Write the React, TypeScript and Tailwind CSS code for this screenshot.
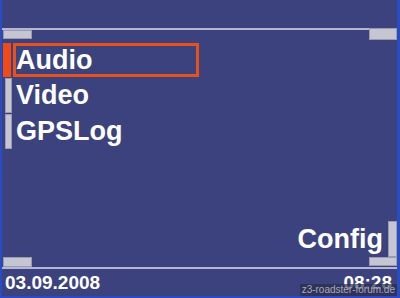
const font = { fontFamily: '"Liberation Sans", Arial, sans-serif' };

function SideBar({ active }: { active?: boolean }) {
  return (
    <div
      className={
        active
          ? "ml-[3px] w-[7px] self-stretch bg-[#f04a18]"
          : "ml-[3px] w-[7px] self-stretch border border-[#9a9ab0] bg-[#c6c6d2]"
      }
    />
  );
}

export default function App() {
  return (
    <div
      className="relative flex h-[298px] w-[400px] flex-col overflow-hidden border-b-2 border-l-2 border-r-[3px] border-[#2a4cc0] bg-[#3c427e] text-white"
      style={font}
    >
      <div className="h-[28px]" />

      <div className="flex h-[15px]">
        <div className="flex-1 border-t-2 border-[#b4b6d6]">
          <div className="ml-[1px] h-[9px] w-[29px] border border-[#9a9ab0] bg-[#c6c6d2]" />
        </div>
        <div className="h-[12px] w-[28px] border border-[#9a9ab0] bg-[#c6c6d2]" />
      </div>

      <div className="flex h-[34px] items-stretch">
        <div className="ml-[1px] w-[8px] self-stretch bg-[#f04a18]" />
        <div className="ml-[2px] flex w-[186px] items-center border-[3px] border-[#e8501c] text-[27px] leading-none font-bold">
          Audio
        </div>
      </div>
      <div className="mt-[1px] flex h-[35px] items-center">
        <SideBar />
        <span className="ml-[4px] text-[27px] leading-none font-bold">Video</span>
      </div>
      <div className="mt-[1px] flex h-[35px] items-center">
        <SideBar />
        <span className="ml-[4px] text-[27px] leading-none font-bold">GPSLog</span>
      </div>

      <div className="flex-1" />

      <div className="flex h-[36px] items-center justify-end">
        <span className="mr-[5px] text-[27px] leading-none font-bold">Config</span>
        <div className="w-[9px] self-stretch border border-[#9a9ab0] bg-[#c6c6d2]" />
      </div>

      <div className="flex h-[10px] items-end justify-between">
        <div className="ml-[1px] h-[10px] w-[29px] border border-[#9a9ab0] bg-[#c6c6d2]" />
        <div className="h-[9px] w-[28px] self-start border border-[#9a9ab0] bg-[#c6c6d2]" />
      </div>
      <div className="h-[2px] bg-[#b4b6d6]" />

      <div className="flex h-[27px] items-center justify-between px-[3px] pb-[1px] text-[19px] leading-none font-bold">
        <span>03.09.2008</span>
        <span className="mr-[2px]">08:28</span>
      </div>

      <div className="absolute right-0 bottom-0 bg-[#2a2e4e]/70 px-[2px] text-[10px] leading-[12px] text-[#a8a8b4]">
        z3-roadster-forum.de
      </div>
    </div>
  );
}
